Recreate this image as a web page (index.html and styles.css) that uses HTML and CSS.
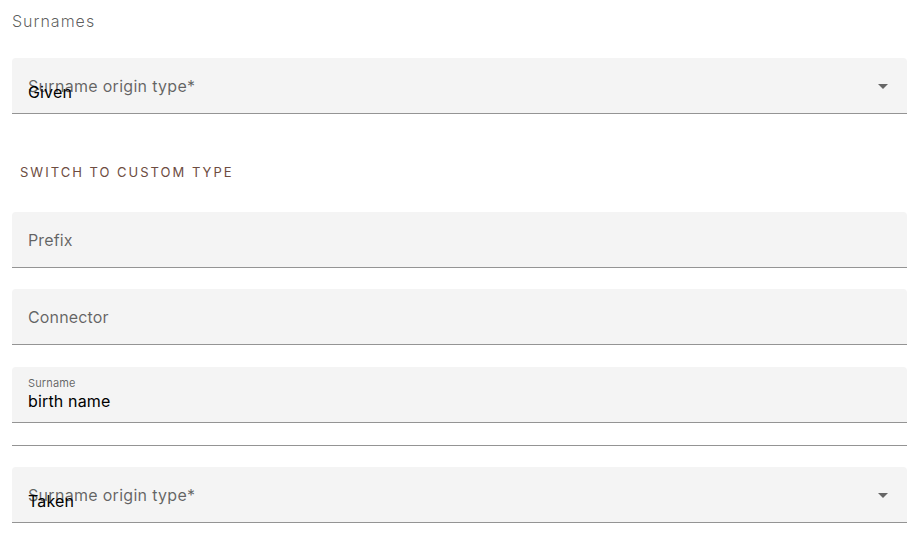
FILE: index.html
```html
<!DOCTYPE html>
<html>
<head>
<meta charset="utf-8">
<link rel="stylesheet" href="styles.css">
</head>
<body>
<div class="page">
  <div class="heading">Surnames</div>

  <div class="field select first">
    <span class="label">Surname origin type*</span>
    <span class="value">Given</span>
    <svg class="arrow" width="10" height="5" viewBox="0 0 10 5"><path d="M0 0h10L5 5z" fill="#666"/></svg>
  </div>

  <div class="btn-row"><button class="text-btn">Switch to custom type</button></div>

  <div class="field"><span class="label">Prefix</span></div>
  <div class="field gap21"><span class="label">Connector</span></div>
  <div class="field gap22 filled">
    <span class="small-label">Surname</span>
    <span class="filled-value">birth name</span>
  </div>
  <div class="divider"></div>

  <div class="field select gap21">
    <span class="label">Surname origin type*</span>
    <span class="value">Taken</span>
    <svg class="arrow" width="10" height="5" viewBox="0 0 10 5"><path d="M0 0h10L5 5z" fill="#666"/></svg>
  </div>
</div>
</body>
</html>
```

FILE: styles.css
```css
* { box-sizing: border-box; }
html, body { margin: 0; padding: 0; background: #fff; }
body { font-family: Inter, "Noto Sans", sans-serif; color: rgba(0,0,0,0.87); letter-spacing: 0.15px; }
.page { padding: 9px 15px 0 12px; display: flex; flex-direction: column; }
.heading { font-size: 16px; line-height: 24px; color: rgba(0,0,0,0.65); font-weight: 300; letter-spacing: 1px; }
.field {
  position: relative;
  height: 56px;
  background: #f4f4f4;
  border-radius: 4px 4px 0 0;
  border-bottom: 1px solid #949494;
  display: flex;
  align-items: center;
  padding: 0 16px;
}
.field.first { margin-top: 25px; }
.gap21 { margin-top: 21px; }
.gap22 { margin-top: 22px; }
.label { font-size: 16px; line-height: 20px; color: rgba(0,0,0,0.6); }
.select .label { position: absolute; left: 16px; top: 18px; letter-spacing: 0.3px; }
.select .value { position: absolute; left: 16px; top: 24px; font-size: 16px; line-height: 20px; color: #000; }
.arrow { position: absolute; right: 19px; top: 26px; }
.btn-row { margin-top: 40px; margin-bottom: 22px; height: 36px; display: flex; align-items: center; }
.text-btn {
  background: none; border: 0; padding: 0 8px; height: 36px;
  font-family: Inter, "Noto Sans", sans-serif;
  font-size: 13px; letter-spacing: 2px; text-transform: uppercase;
  color: #6d4c41; font-weight: 400;
}
.filled { flex-direction: column; align-items: flex-start; justify-content: flex-start; padding-top: 9px; }
.small-label { font-size: 11px; line-height: 14px; color: rgba(0,0,0,0.6); }
.filled-value { font-size: 16px; line-height: 20px; margin-top: 1px; color: #000; }
.divider { height: 23px; border-bottom: 1px solid #949494; }
```
